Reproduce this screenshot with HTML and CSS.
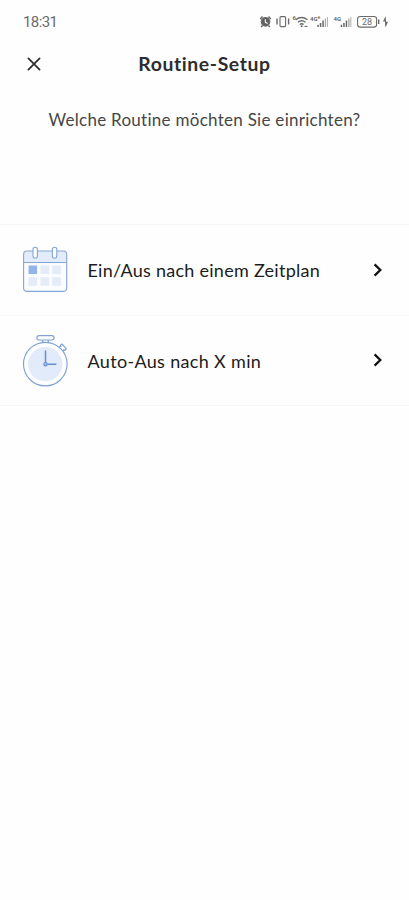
FILE: index.html
```html
<!DOCTYPE html>
<html lang="de">
<head>
<meta charset="utf-8">
<meta name="viewport" content="width=device-width">
<title>Routine-Setup</title>
<link rel="stylesheet" href="styles.css">
</head>
<body>
<div class="status">
  <time class="clock">18:31</time>
  <svg class="status-icons" width="130" height="16" viewBox="259 14 130 16" aria-hidden="true">
    <g fill="none" stroke="#6a6a6a" stroke-width="1.1">
      <circle cx="265.5" cy="21.8" r="4.3" fill="#626262"/>
      <path d="M260.2 19l2.3-2.6M270.8 19l-2.3-2.6M262.5 25.5l-1.3 1.5M268.5 25.5l1.3 1.5" stroke-width="1.5"/>
      <path d="M265.3 19.2v3l2.3 1.2" stroke="#fff"/>
      <rect x="280" y="16.6" width="5.6" height="10" rx="1"/>
      <path d="M277 18.5v6M288.6 18.5v6" stroke-width="1.4"/>
      <path d="M295.8 19.8q5.8-4.6 11.6 0M297.9 22.2q3.8-3 7.6 0M299.8 24.5q1.9-1.5 3.8 0" stroke-width="1.4"/>
      <path d="M304.5 26.4h3"/>
      <rect x="357.6" y="16.5" width="19" height="10.6" rx="2.6"/>
      <path d="M378.7 19.5v4.6" stroke-width="1.4"/>
    </g>
    <g fill="#6a6a6a">
      <circle cx="301.7" cy="26.3" r="1"/>
      <path d="M317.3 24.8h1.5v2.2h-1.5zM319.8 23h1.5v4h-1.5zM322.3 20.6h1.5v6.4h-1.5z"/>
      <path d="M340.7 24.8h1.5v2.2h-1.5zM343.2 23h1.5v4h-1.5zM345.7 20.6h1.5v6.4h-1.5z"/>
      <path opacity=".6" d="M324.8 18.6h1.3V27h-1.3zM327.2 17h.8v10h-.8zM348.2 18.6h1.3V27h-1.3zM350.4 17h.9v10h-.9z"/>
      <path d="M385.6 16l-2.6 5.6h2v3l.6 2.6 2.4-5.4h-2z"/>
    </g>
    <g class="status-label">
      <text x="292.5" y="19.8">6</text>
      <text x="310" y="20.6">4G</text><text x="317.2" y="18.8">+</text>
      <text x="333.6" y="20.6">4G</text>
      <text class="battery" x="362" y="25.3">28</text>
    </g>
  </svg>
</div>
<header class="bar">
  <button class="close" aria-label="Schließen">
    <svg width="14" height="14" viewBox="0 0 14 14"><path d="M1.4 1.4l11.2 11.2M12.6 1.4L1.4 12.6" fill="none" stroke="#2b2b2b" stroke-width="1.7" stroke-linecap="round"/></svg>
  </button>
  <h1 class="title">Routine-Setup</h1>
</header>
<p class="question">Welche Routine möchten Sie einrichten?</p>
<ul class="list">
  <li class="row">
    <svg class="pic" width="46" height="54" viewBox="22 243 46 54">
      <rect x="23.6" y="251" width="43.1" height="40.4" rx="3.5" fill="#fafcff"/>
      <path d="M23.6 262.5v-8a3.5 3.5 0 013.5-3.5h36.1a3.5 3.5 0 013.5 3.5v8z" fill="#e3ecfb"/>
      <g fill="none" stroke="#86a5d6" stroke-width="1.1">
        <rect x="23.6" y="251" width="43.1" height="40.4" rx="3.5"/><path d="M23.6 262.5h43.1"/>
        <rect x="33" y="247.2" width="4.4" height="11" rx="2.2" fill="#fff"/><rect x="52.4" y="247.2" width="4.4" height="11" rx="2.2" fill="#fff"/>
      </g>
      <path d="M28.6 265.4h8.5v8.5h-8.5z" fill="#93b3ea"/>
      <path d="M40.4 265.4h8.7v8.5h-8.7zM52.2 265.4h8.7v8.5h-8.7zM28.4 277.2h8.7v8.5h-8.7zM40.4 277.2h8.7v8.5h-8.7zM52.2 277.2h8.7v8.5h-8.7z" fill="#e4ecf9"/>
    </svg>
    <span class="label schedule">Ein/Aus nach einem Zeitplan</span>
    <svg class="chevron" width="10" height="14" viewBox="0 0 10 14"><path d="M1.6 1.4L7.3 7l-5.7 5.6" fill="none" stroke="#111" stroke-width="2.3"/></svg>
  </li>
  <li class="row">
    <svg class="pic" width="46" height="54" viewBox="22 333 46 54">
      <g fill="#fff" stroke="#7fa3d6" stroke-width="1.15" stroke-linejoin="round">
        <path d="M42.7 340.2v3M48.3 340.2v3" stroke-width="1.5"/>
        <rect x="36.9" y="335.6" width="17.2" height="4.4" rx="2.2"/>
        <path d="M58 347.3l3.1-1-.8-1.1 1.6-1.2 4.4 4.6-1.3 1.7-1.1-.8-1.9 3.3z"/>
        <circle cx="45.3" cy="364.1" r="21.8"/>
      </g>
      <circle cx="45.3" cy="364.1" r="17.2" fill="#e2ebfa"/>
      <path d="M45.5 350.4v12.2M47.2 364.2h9.2" stroke="#6590d0" stroke-width="1.5" fill="none"/>
      <circle cx="45.5" cy="364.2" r="1.7" fill="#a9c1ea" stroke="#6590d0" stroke-width="1.1"/>
    </svg>
    <span class="label timer">Auto-Aus nach X min</span>
    <svg class="chevron" width="10" height="14" viewBox="0 0 10 14"><path d="M1.6 1.4L7.3 7l-5.7 5.6" fill="none" stroke="#111" stroke-width="2.3"/></svg>
  </li>
</ul>
</body>
</html>
```
FILE: styles.css
```css
* { box-sizing: border-box; }
body {
  margin: 0;
  min-height: 900px;
  background: #fefefe;
  color: #1c1c1c;
  font-family: Lato, "Noto Sans", sans-serif;
  font-variant-ligatures: none;
}
.status {
  height: 44px;
  padding: 0 20px 0 23px;
  display: flex;
  align-items: center;
  justify-content: space-between;
}
.clock {
  font: 15px/20px Roboto, sans-serif;
  letter-spacing: -0.6px;
  color: #6c6c6c;
}
.status-icons { display: block; }
.status-label { font: bold 6px Roboto, sans-serif; fill: #6a6a6a; }
.battery { font: 9px Roboto, sans-serif; }
.bar {
  height: 40px;
  display: grid;
  grid-template-columns: 60px 1fr 60px;
  align-items: center;
}
.close {
  display: flex;
  margin: 0 0 0 27px;
  padding: 0;
  width: 14px;
  border: 0;
  background: none;
}
.title {
  margin: 0;
  text-align: center;
  font-size: 19.4px;
  line-height: 24px;
  letter-spacing: 0.6px;
  font-weight: 700;
  color: #2d2d2d;
}
.question {
  margin: 24px 0 0;
  text-align: center;
  font-size: 17px;
  line-height: 24px;
  letter-spacing: 0.28px;
  color: #464646;
}
.list { list-style: none; margin: 92px 0 0; padding: 0; border-top: 1px solid #f5f5f5; }
.row {
  height: 90.5px;
  padding: 0 26px 0 22px;
  display: flex;
  align-items: center;
  border-bottom: 1px solid #f5f5f5;
}
.pic { flex: none; }
.label { flex: 1; margin-left: 19.5px; font-size: 18px; line-height: 24px; letter-spacing: 0.27px; }
.timer { padding-top: 1.5px; letter-spacing: 0.33px; }
.chevron { flex: none; }
```
